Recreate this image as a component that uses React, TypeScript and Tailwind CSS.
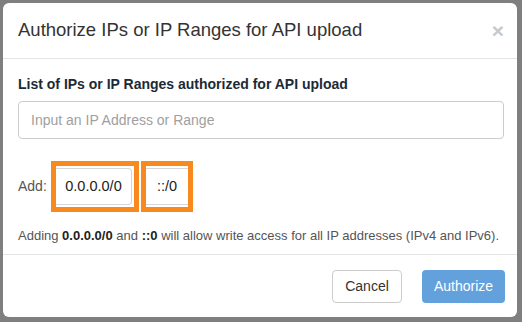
export default function App() {
  return (
    <div className="w-[522px] h-[322px] bg-[#7f7f7f] p-[3px] font-['Liberation_Sans',Arial,sans-serif]">
      <div className="w-[514px] h-[314px] bg-white rounded-[6px] flex flex-col overflow-hidden">
        {/* header */}
        <div className="h-[56px] shrink-0 flex items-center justify-between pl-[15px] pr-[13px] border-b border-[#e5e5e5]">
          <h1 className="text-[18.5px] text-[#333] leading-none">Authorize IPs or IP Ranges for API upload</h1>
          <span className="text-[21px] font-bold text-[#c8c8c8] leading-none">×</span>
        </div>

        {/* body */}
        <div className="px-[15px] pt-[15px] h-[196px] shrink-0 border-b border-[#e5e5e5]">
          <label className="block text-[14px] font-bold text-[#1c2a35] leading-[20px]">
            List of IPs or IP Ranges authorized for API upload
          </label>
          <input
            className="mt-[7px] w-[486px] h-[38px] border border-[#ccc] rounded-[4px] px-[12px] text-[14px] placeholder:text-[#a0a0a0] outline-none"
            placeholder="Input an IP Address or Range"
          />
          <div className="mt-[22px] flex items-center">
            <span className="text-[14px] text-[#555] w-[33px]">Add:</span>
            <div className="border-[5px] border-[#f7891f] w-[88px] h-[51px] bg-white p-[2px] pl-0">
              <button className="w-full h-full border-y border-r border-[#d6d6d6] rounded-r-[4px] text-[14.5px] text-[#222]">
                0.0.0.0/0
              </button>
            </div>
            <div className="ml-[2px] border-[5px] border-[#f7891f] w-[52px] h-[51px] bg-white py-[2px]">
              <button className="w-full h-full border-y border-[#d6d6d6] text-[14.5px] text-[#222]">::/0</button>
            </div>
          </div>
          <p className="mt-[15px] text-[13px] leading-[18px] text-[#555] whitespace-nowrap">
            Adding <b className="text-[#222]">0.0.0.0/0</b> and <b className="text-[#222]">::0</b> will allow write access for all IP addresses (IPv4 and IPv6).
          </p>
        </div>

        {/* footer */}
        <div className="flex justify-end gap-[20px] pr-[12px] pt-[15px]">
          <button className="w-[70px] h-[33px] border border-[#ccc] rounded-[4px] text-[14px] text-[#333] bg-white">Cancel</button>
          <button className="w-[83px] h-[33px] rounded-[4px] text-[14px] text-white bg-[#62a1dc]">Authorize</button>
        </div>
      </div>
    </div>
  );
}
